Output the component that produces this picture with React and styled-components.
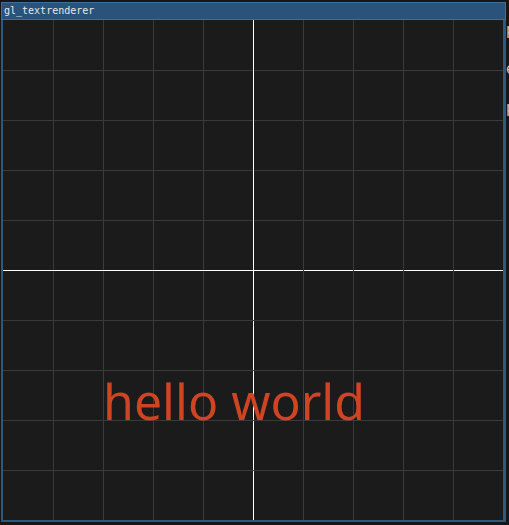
import React from 'react'
import styled, { createGlobalStyle } from 'styled-components'

const GlobalStyle = createGlobalStyle`
    html, body {
        margin: 0;
        padding: 0;
        background: #161616;
        overflow: hidden;
    }
`

const SIZE = 500
const STEP = 50

const Grid = () => {
    const lines = []
    for (let i = 1; i < SIZE / STEP; i++) {
        const p = i * STEP + 0.5
        const axis = i === SIZE / STEP / 2
        const stroke = axis ? '#ffffff' : '#3a3a3a'
        lines.push(<line key={'v' + i} x1={p} y1={0} x2={p} y2={SIZE} stroke={stroke} strokeWidth={1} />)
        lines.push(<line key={'h' + i} x1={0} y1={p} x2={SIZE} y2={p} stroke={stroke} strokeWidth={1} />)
    }
    return (
        <GridSvg width={SIZE} height={SIZE} viewBox={`0 0 ${SIZE} ${SIZE}`}>
            {lines}
        </GridSvg>
    )
}

const App = () => {
    return (
        <>
            <GlobalStyle />
            <Desktop>
                <Window>
                    <TitleBar>gl_textrenderer</TitleBar>
                    <Canvas>
                        <Grid />
                        <Label>hello world</Label>
                    </Canvas>
                </Window>
                <SidePanel>
                    <SideLine>position</SideLine>
                    <SideLine>edit</SideLine>
                    <SideLine>params</SideLine>
                </SidePanel>
            </Desktop>
        </>
    )
}

const Desktop = styled.div`
    display: flex;
    align-items: flex-start;
    width: 509px;
    height: 525px;
    padding: 2px 0 0 1px;
    box-sizing: border-box;
    overflow: hidden;
`

const Window = styled.div`
    display: flex;
    flex-direction: column;
    flex-shrink: 0;
    width: 505px;
    background: #2b5a80;
`

const TitleBar = styled.div`
    height: 18px;
    box-sizing: border-box;
    padding: 0 0 0 2px;
    background: #29537a;
    border: 1px solid #3f6f96;
    color: #e6e6e6;
    font-family: "DejaVu Sans Mono", monospace;
    font-size: 10px;
    line-height: 16px;
    white-space: nowrap;
`

const Canvas = styled.div`
    position: relative;
    width: ${SIZE}px;
    height: ${SIZE}px;
    margin: 0 3px 2px 2px;
    background: #1b1b1b;
    overflow: hidden;
`

const GridSvg = styled.svg`
    display: block;
`

const Label = styled.div`
    position: absolute;
    left: 100px;
    top: 345px;
    color: #cf4422;
    font-family: "Noto Sans", sans-serif;
    font-size: 50px;
    line-height: 72px;
    white-space: nowrap;
`

const SidePanel = styled.div`
    display: flex;
    flex-direction: column;
    gap: 20px;
    padding: 19px 0 0 0;
    flex-shrink: 0;
`

const SideLine = styled.div`
    color: #c4c4c4;
    font-family: "DejaVu Sans", sans-serif;
    font-size: 15px;
    line-height: 19px;
    white-space: nowrap;
`

export default App
